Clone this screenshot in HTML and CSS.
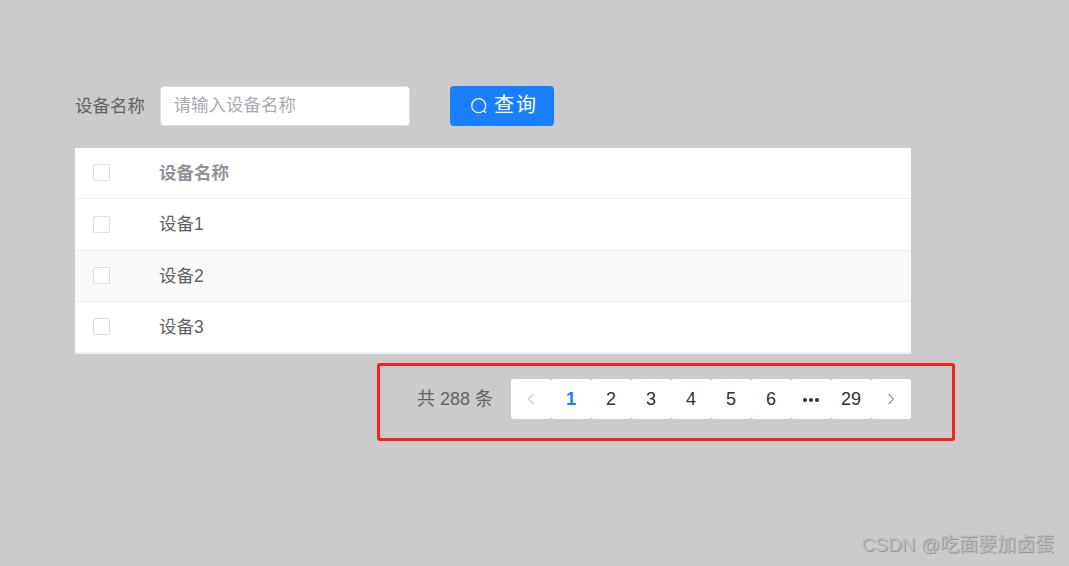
FILE: index.html
```html
<!DOCTYPE html>
<html lang="zh">
<head>
<meta charset="utf-8">
<title>设备列表</title>
<link rel="stylesheet" href="styles.css">
</head>
<body>
<main class="page">
  <form class="search">
    <label class="search-label">设备名称</label>
    <div class="input">请输入设备名称</div>
    <div class="btn">
      <svg class="btn-icon" viewBox="0 0 18 18" width="18" height="18"><circle cx="8.7" cy="8.7" r="7" fill="none" stroke="#fff" stroke-width="1.2"/><path d="M13.8 13.8l2.2 2.2" fill="none" stroke="#fff" stroke-width="1.2"/></svg>
      <span class="btn-text">查询</span>
    </div>
  </form>
  <div class="table">
    <div class="row head"><span class="check"></span><span class="cell">设备名称</span></div>
    <div class="row tall"><span class="check"></span><span class="cell">设备1</span></div>
    <div class="row alt"><span class="check"></span><span class="cell">设备2</span></div>
    <div class="row last"><span class="check"></span><span class="cell">设备3</span></div>
  </div>
  <div class="pager">
    <span class="total">共 288 条</span>
    <div class="pages">
      <span class="pg prev"><svg viewBox="0 0 12 12" width="12" height="12"><path d="M8.5 1L3.5 6 8.5 11" fill="none" stroke="#a8abb2" stroke-width="1"/></svg></span>
      <span class="pg active">1</span>
      <span class="pg">2</span>
      <span class="pg">3</span>
      <span class="pg">4</span>
      <span class="pg">5</span>
      <span class="pg">6</span>
      <span class="pg dots"><i class="dot"></i><i class="dot"></i><i class="dot"></i></span>
      <span class="pg">29</span>
      <span class="pg next"><svg viewBox="0 0 12 12" width="12" height="12"><path d="M3.5 1L8.5 6 3.5 11" fill="none" stroke="#555" stroke-width="1"/></svg></span>
    </div>
  </div>
</main>
<div class="highlight"></div>
<div class="watermark">CSDN @吃面要加卤蛋</div>
</body>
</html>
```
FILE: styles.css
```css
* { box-sizing: border-box; }
html, body { margin: 0; height: 100%; }
body {
  background: #cbcbcb;
  font-family: "Liberation Sans", "Noto Sans CJK SC", sans-serif;
  color: #606266;
  overflow: hidden;
  position: relative;
}
.page { width: 911px; padding: 86px 0 0 75px; }
.search { display: flex; align-items: center; height: 40px; margin-bottom: 22px; }
.search-label { font-size: 17.5px; color: #606266; width: 85px; white-space: nowrap; margin-top: -4px; }
.input {
  width: 250px; height: 40px; background: #fff;
  border: 1px solid #dcdfe6; border-radius: 4px;
  padding-left: 12.5px; font-size: 17.5px; line-height: 36px; color: #a8abb2;
  white-space: nowrap;
}
.btn {
  margin-left: 40px; width: 104px; height: 40px; background: #1a7fff;
  border-radius: 4px; color: #fff; display: flex; align-items: center; padding-left: 20px;
}
.btn-icon { display: block; flex: none; }
.btn-text { font-size: 20px; letter-spacing: 2px; margin-left: 6px; margin-top: -6px; white-space: nowrap; }
.table { background: #fff; border-bottom: 2px solid #ebeef5; height: 206px; }
.row {
  display: flex; align-items: center; height: 51px; padding-left: 18px;
  border-bottom: 1px solid #ebeef5; font-size: 17.5px; color: #606266;
}
.row.tall { height: 52px; }
.row.last { border-bottom: 0; height: 50px; }
.alt { background: #fafafa; }
.head { color: #909399; font-weight: 700; }
.check {
  width: 17px; height: 17px; border: 1px solid #dcdfe6; border-radius: 2px;
  background: #fff; margin: -1px 49px 0 0; flex: none;
}
.cell { white-space: nowrap; margin-top: -4px; }
.pager { display: flex; justify-content: flex-end; align-items: center; height: 40px; margin-top: 25px; }
.total { font-size: 18px; color: #606266; margin-right: 18px; white-space: nowrap; margin-top: -4px; }
.pages { display: flex; }
.pg {
  width: 40px; height: 40px; display: flex; align-items: center; justify-content: center;
  font-size: 18px; color: #303133; background: #fff; border-radius: 3px;
}
.active { color: #1a7fff; font-weight: 700; }
.dots { gap: 2px; padding-top: 1px; }
.dot { width: 4px; height: 4px; border-radius: 50%; background: #303133; display: block; }
.highlight {
  position: absolute; left: 377px; top: 363px; width: 578px; height: 78px;
  border: 3px solid #f5231c; border-radius: 3px;
}
.watermark {
  position: absolute; right: 15px; top: 533px; font-size: 19px; line-height: 24px;
  color: #bcbcbc; text-shadow: 1px 1px 0 #979797; white-space: nowrap;
}
```
